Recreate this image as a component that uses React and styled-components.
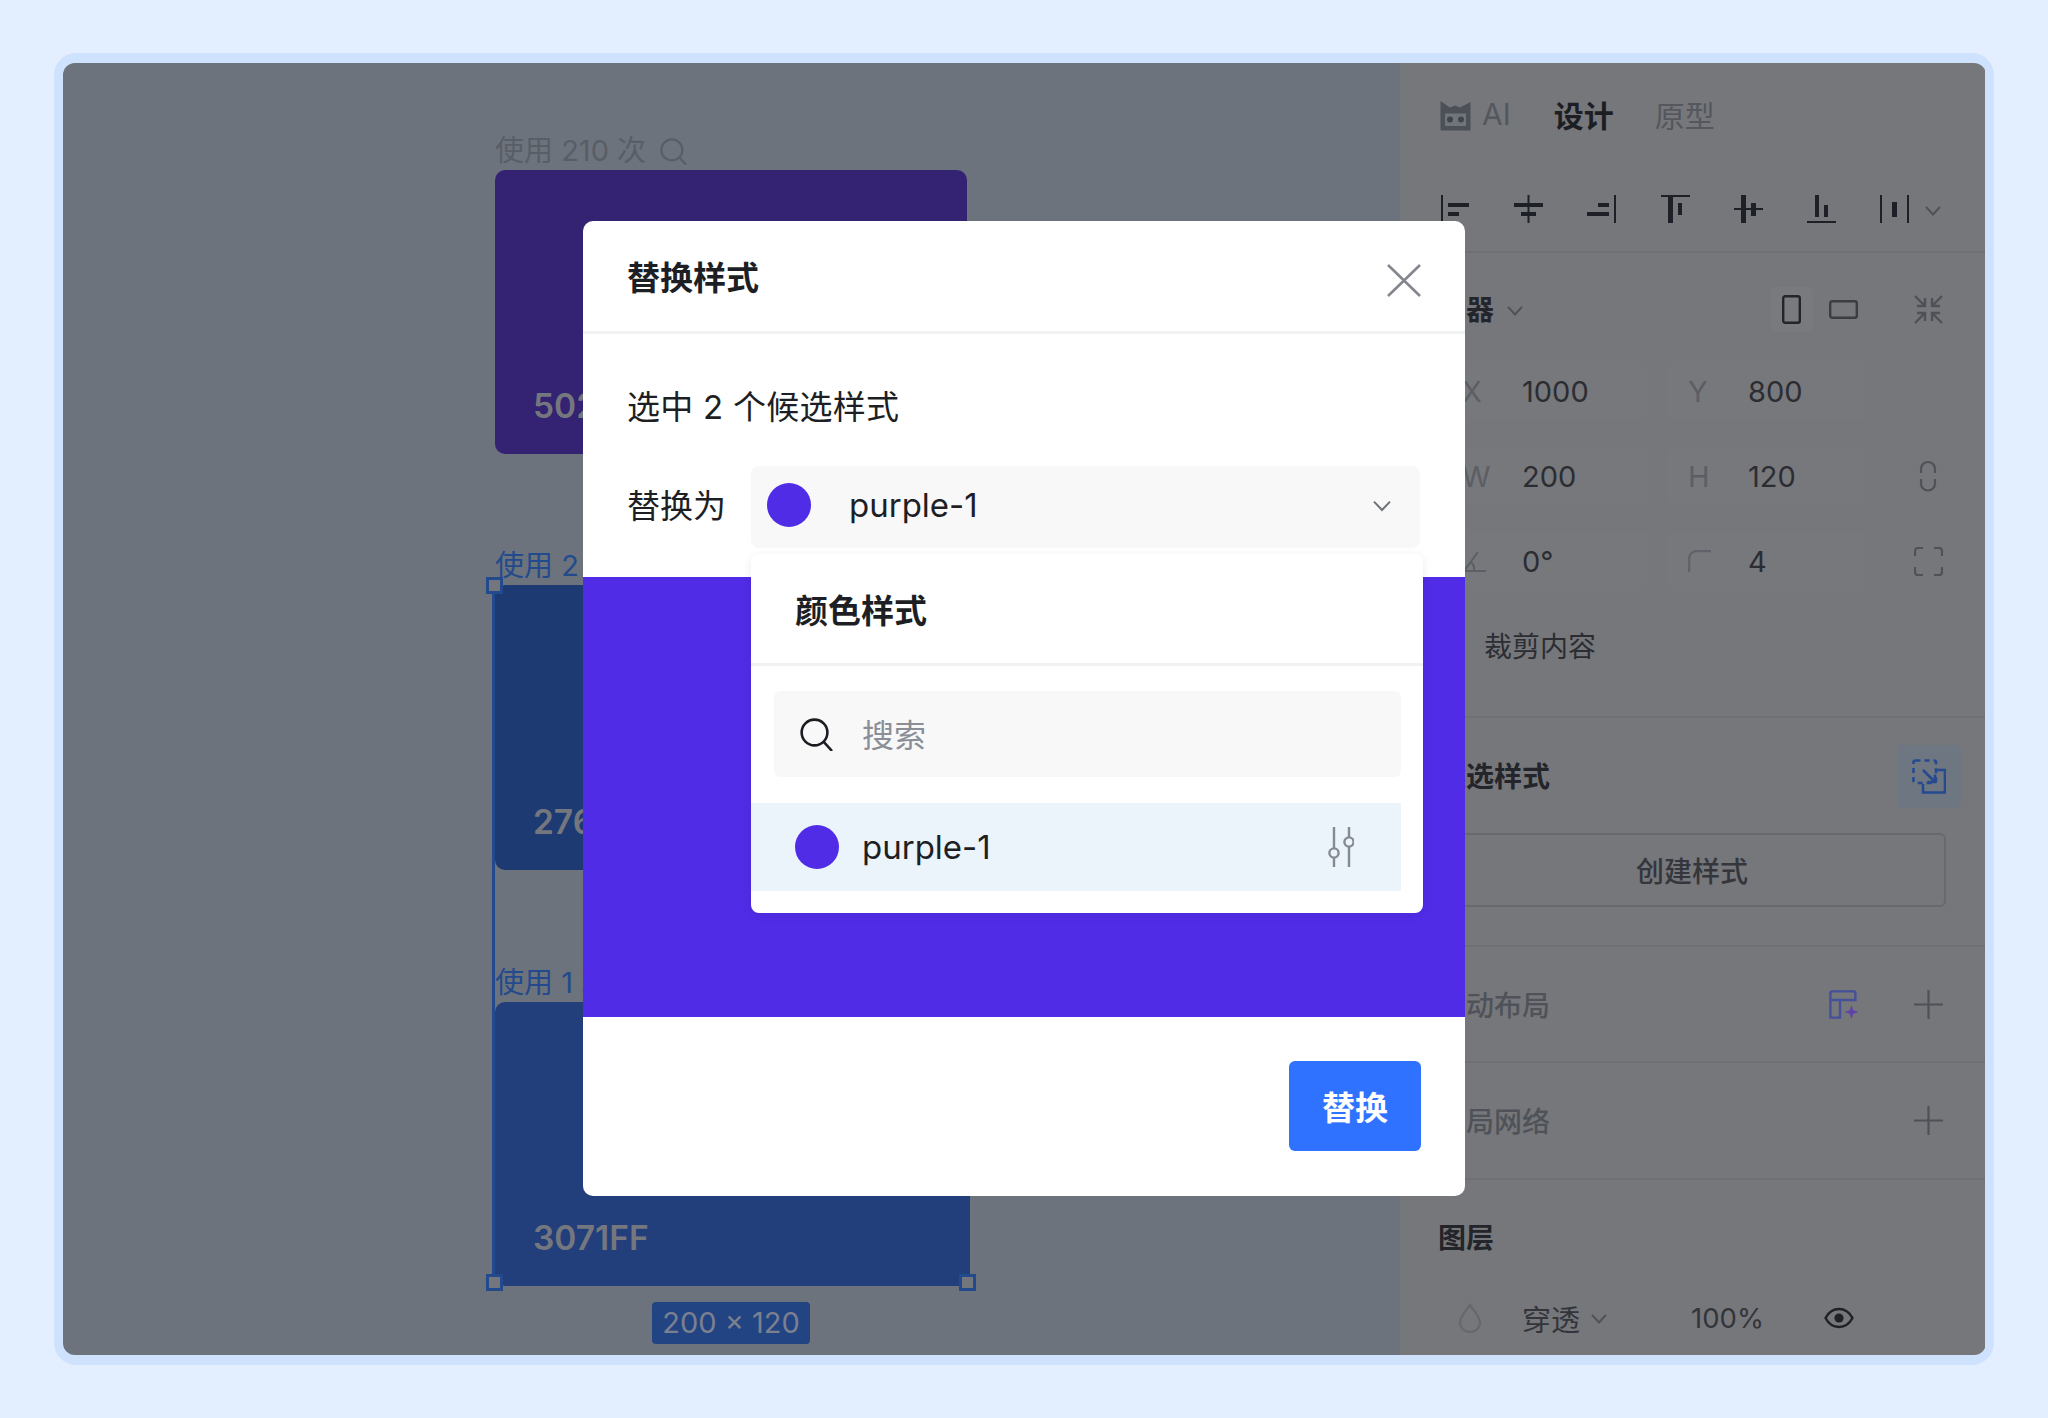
import React from "react";
import styled, { createGlobalStyle } from "styled-components";

const Global = createGlobalStyle`
  html, body { margin: 0; padding: 0; background: #e3effe; }
  body { font-family: Inter, "Noto Sans CJK SC", sans-serif; -webkit-font-smoothing: antialiased; }
  * { box-sizing: border-box; }
`;

const Page = styled.div`
  width: 2048px;
  height: 1418px;
  padding: 53px 54px;
  overflow: hidden;
`;
const Frame = styled.div`
  position: relative;
  width: 1940px;
  height: 1312px;
  border: 10px solid #cfe2fd;
  border-left-width: 9px;
  border-right-width: 8px;
  border-radius: 22px;
  display: flex;
  background: #cfe2fd;
`;
const Window = styled.div`
  flex: 1;
  display: flex;
  border-radius: 12px;
  overflow: hidden;
`;

/* ---- canvas ---- */
const Canvas = styled.div`
  position: relative;
  width: 1337px;
  height: 1292px;
  background: #6c737c;
  padding: 69px 0 0 432px;
`;
const Usage = styled.div`
  display: flex;
  align-items: center;
  gap: 14px;
  height: 38px;
  margin-top: ${p => p.$gap || 0}px;
  font-size: 29px;
  line-height: 38px;
  white-space: nowrap;
  color: ${p => (p.$selected ? "#234a8c" : "#595e66")};
`;
const Swatch = styled.div`
  position: relative;
  width: ${p => (p.$selected ? 475 : 472)}px;
  height: ${p => p.$h}px;
  border-radius: 10px;
  background: ${p => p.$color};
`;
const SwatchName = styled.div`
  position: absolute;
  left: 38px;
  bottom: 28px;
  font-size: 33.5px;
  line-height: 40px;
  font-weight: 600;
  color: #75777e;
`;
const Selection = styled.div`
  position: absolute;
  left: 429px;
  top: 522px;
  width: 478px;
  height: 701px;
  border-left: 3px solid #234a8c;
`;
const Handle = styled.div`
  position: absolute;
  left: ${p => p.$x}px;
  top: ${p => p.$y}px;
  width: 17px;
  height: 17px;
  background: #73767c;
  border: 3px solid #234a8c;
`;
const SizeTag = styled.div`
  position: absolute;
  left: 589px;
  top: 1239px;
  width: 158px;
  height: 42px;
  border-radius: 4px;
  background: #234482;
  color: #7b8090;
  font-size: 29px;
  line-height: 41px;
  text-align: center;
  white-space: nowrap;
`;

/* ---- side panel ---- */
const Side = styled.aside`
  width: 585px;
  height: 1292px;
  background: #76777b;
  display: flex;
  flex-direction: column;
  color: #24262b;
  font-size: 28px;
`;
const Tabs = styled.div`
  height: 106px;
  padding: 0 38px 0 40px;
  display: flex;
  align-items: center;
  flex-shrink: 0;
`;
const Tab = styled.div`
  margin-left: ${p => p.$ml || 0}px;
  padding-bottom: 4px;
  font-size: 30px;
  font-weight: ${p => (p.$active ? 600 : 400)};
  color: ${p => (p.$active ? "#1c1e23" : "#54575d")};
`;
const AlignBar = styled.div`
  height: 84px;
  padding: 26px 0 0 41px;
  display: flex;
  align-items: flex-start;
  gap: 44.2px;
  flex-shrink: 0;
  border-bottom: 2px solid #6f7074;
`;
const AlignLast = styled.div`
  display: flex;
  align-items: center;
  gap: 15px;
  height: 29px;
`;
const Section = styled.section`
  height: ${p => p.$h}px;
  flex-shrink: 0;
  padding: ${p => p.$pt || 0}px 39px 0 38px;
  border-bottom: ${p => (p.$last ? "none" : "2px solid #6f7074")};
`;
const SectionRow = styled.div`
  height: 100%;
  display: flex;
  align-items: center;
  justify-content: space-between;
  padding-right: 3px;
`;
const Head = styled.div`
  display: flex;
  align-items: center;
  justify-content: space-between;
  height: ${p => p.$h || 45}px;
`;
const Title = styled.div`
  display: flex;
  align-items: center;
  gap: 12px;
  font-size: 28px;
  line-height: 40px;
  font-weight: ${p => (p.$muted ? 500 : 600)};
  color: ${p => (p.$muted ? "#4f5258" : "#23252a")};
  padding-top: ${p => (p.$muted ? 3 : 0)}px;
`;
const RightIcons = styled.div`
  display: flex;
  align-items: center;
  gap: ${p => p.$gap || 55}px;
  margin-right: ${p => p.$mr || 0}px;
`;
const Toggle = styled.div`
  display: flex;
  align-items: center;
  gap: 9px;
`;
const ToggleCell = styled.div`
  width: 43px;
  height: 45px;
  display: flex;
  align-items: center;
  justify-content: center;
  border-radius: 6px;
  background: ${p => (p.$on ? "#797a7e" : "transparent")};
`;
const FieldGrid = styled.div`
  margin-top: 29px;
  display: grid;
  grid-template-columns: 208px 199px 1fr;
  column-gap: 18px;
  row-gap: 25px;
  padding-left: 2px;
`;
const Field = styled.div`
  height: 60px;
  padding-left: 22px;
  display: flex;
  align-items: center;
  border-radius: 6px;
  background: #77787b;
  font-size: 29px;
  color: #2b2d33;
`;
const FieldLabel = styled.span`
  width: 60px;
  flex-shrink: 0;
  display: flex;
  align-items: center;
  color: #5b5e65;
`;
const FieldAction = styled.div`
  display: flex;
  align-items: center;
  justify-content: flex-end;
  padding-right: ${p => p.$pr || 0}px;
`;
const ClipRow = styled.label`
  margin-top: 34px;
  display: flex;
  align-items: center;
  gap: 22px;
  height: 40px;
  font-size: 28px;
  color: #2b2d33;
`;
const Check = styled.span`
  width: 24px;
  height: 24px;
  border: 2px solid #55585e;
  border-radius: 4px;
`;
const SwapBtn = styled.div`
  width: 64px;
  height: 63px;
  margin-right: -15px;
  border-radius: 4px;
  background: #6e7681;
  display: flex;
  align-items: center;
  justify-content: center;
`;
const CreateBtn = styled.div`
  margin-top: 25px;
  height: 74px;
  border: 2px solid #68696d;
  border-radius: 6px;
  display: flex;
  align-items: center;
  justify-content: center;
  font-size: 28px;
  font-weight: 500;
  color: #34363c;
`;
const LayerRow = styled.div`
  margin-top: 40px;
  height: 40px;
  padding-left: 20px;
  display: flex;
  align-items: center;
  color: #33353b;
`;
const LayerText = styled.span`
  margin-left: ${p => p.$ml}px;
  font-size: ${p => p.$size || 29}px;
`;

/* ---- dialog ---- */
const Dialog = styled.div`
  position: absolute;
  left: 520px;
  top: 158px;
  width: 882px;
  height: 975px;
  border-radius: 10px;
  background: #fff;
  display: flex;
  flex-direction: column;
`;
const DialogHead = styled.div`
  height: 113px;
  flex-shrink: 0;
  padding: 9px 44px 0 44px;
  display: flex;
  align-items: center;
  justify-content: space-between;
  border-bottom: 3px solid #f1f2f3;
`;
const DialogTitle = styled.div`
  margin-top: -10px;
  font-size: 33px;
  font-weight: 600;
  color: #1d1f24;
`;
const DialogBody = styled.div`
  height: 243px;
  flex-shrink: 0;
  padding: 51px 45px 0 44px;
`;
const Hint = styled.div`
  font-size: 33px;
  line-height: 44px;
  letter-spacing: 0.25px;
  color: #1d1f24;
`;
const ReplaceRow = styled.div`
  margin-top: 37px;
  display: flex;
  align-items: center;
  gap: 25px;
`;
const ReplaceLabel = styled.div`
  padding-bottom: 6px;
  font-size: 33px;
  color: #1d1f24;
  white-space: nowrap;
`;
const Select = styled.div`
  width: 669px;
  height: 82px;
  padding: 0 28px 5px 16px;
  display: flex;
  align-items: center;
  gap: 38px;
  border-radius: 8px;
  background: #f8f8f9;
  font-size: 33px;
  color: #1d1f24;
`;
const Dot = styled.span`
  width: 44px;
  height: 44px;
  border-radius: 50%;
  background: #502ce6;
  flex-shrink: 0;
`;
const Grow = styled.span`
  flex: 1;
`;
const Band = styled.div`
  height: 440px;
  flex-shrink: 0;
  background: #502ce6;
`;
const DialogFoot = styled.div`
  flex: 1;
  padding: 44px 44px 0 0;
  display: flex;
  justify-content: flex-end;
  align-items: flex-start;
`;
const Primary = styled.div`
  width: 132px;
  height: 90px;
  border-radius: 6px;
  background: #2e72ff;
  color: #fff;
  font-size: 33px;
  font-weight: 600;
  display: flex;
  align-items: center;
  justify-content: center;
`;
const Menu = styled.div`
  position: absolute;
  left: 168px;
  top: 333px;
  width: 672px;
  height: 359px;
  border-radius: 8px;
  background: #fff;
  box-shadow: 0 2px 10px rgba(20, 20, 60, 0.08);
`;
const MenuHead = styled.div`
  height: 112px;
  padding: 0 0 0 44px;
  display: flex;
  align-items: center;
  border-bottom: 3px solid #f1f2f3;
  font-size: 33px;
  font-weight: 600;
  color: #1d1f24;
`;
const Search = styled.div`
  margin: 25px 22px 0 23px;
  height: 86px;
  padding: 0 0 0 26px;
  display: flex;
  align-items: center;
  gap: 29px;
  border-radius: 6px;
  background: #f8f8f9;
  font-size: 32px;
  color: #8b8e96;
`;
const SearchText = styled.span`
  padding-bottom: 3px;
`;
const MenuItem = styled.div`
  margin: 26px 22px 0 0;
  height: 88px;
  padding: 0 47px 0 44px;
  display: flex;
  align-items: center;
  gap: 23px;
  background: #ebf3fb;
  font-size: 33px;
  color: #1d1f24;
`;

/* ---- icons ---- */
const Svg = ({ w, h, children, ...rest }) => (
  <svg width={w} height={h} viewBox={`0 0 ${w} ${h}`} fill="none" style={{ display: "block", flexShrink: 0 }} {...rest}>
    {children}
  </svg>
);

const ALIGN = [
  [[0, 0, 2, 28], [7, 8, 21, 4], [7, 17, 11, 4]],
  [[13.5, 0, 2, 28], [0, 8, 29, 4], [7, 17, 15, 4]],
  [[27, 0, 2, 28], [11, 8, 11, 4], [0, 17, 22, 4]],
  [[0, 0, 29, 2], [7, 2, 5, 26], [17, 8, 4, 12]],
  [[0, 13, 29, 2], [7, 0, 5, 28], [17, 8, 5, 13]],
  [[0, 26, 29, 2], [8, 0, 4, 22], [17, 10, 4, 12]],
  [[0, 0, 2, 28], [27, 0, 2, 28], [12, 7, 5, 15]],
];
const AlignIcon = ({ rects }) => (
  <Svg w={29} h={29}>
    {rects.map((r, i) => (
      <rect key={i} x={r[0]} y={r[1]} width={r[2]} height={r[3]} fill="#1d2026" />
    ))}
  </Svg>
);
const Chevron = ({ color = "#4e5157", size = 18 }) => (
  <Svg w={size} h={size}>
    <path d={`M2 ${size * 0.33}L${size / 2} ${size * 0.75}L${size - 2} ${size * 0.33}`} stroke={color} strokeWidth="2" />
  </Svg>
);
const Cat = () => (
  <Svg w={31} h={30}>
    <path d="M0.5 0L10 6.5L15 4.5L20 6.5L30.5 1V29.5H0.5Z" fill="#4c5158" />
    <rect x="5" y="12.5" width="21" height="12.5" fill="#70757b" />
    <circle cx="10" cy="18.5" r="3" fill="#40454c" />
    <circle cx="21" cy="18.5" r="3" fill="#40454c" />
  </Svg>
);
const SearchIcon = ({ size = 33, color = "#1b1d22", sw = 2.6 }) => (
  <Svg w={size} h={size}>
    <circle cx={size * 0.44} cy={size * 0.44} r={size * 0.39} stroke={color} strokeWidth={sw} />
    <path d={`M${size * 0.72} ${size * 0.72}L${size * 0.97} ${size}`} stroke={color} strokeWidth={sw} />
  </Svg>
);
const Close = () => (
  <Svg w={34} h={33}>
    <path d="M1 1L33 32M33 1L1 32" stroke="#83868d" strokeWidth="2.6" />
  </Svg>
);
const Sliders = () => (
  <Svg w={26} h={40}>
    <path d="M6 0V21M6 31V40M21 0V10M21 19V40" stroke="#868a92" strokeWidth="2.4" />
    <circle cx="6" cy="26" r="4.6" stroke="#868a92" strokeWidth="2.4" />
    <circle cx="21" cy="15" r="4.6" stroke="#868a92" strokeWidth="2.4" />
  </Svg>
);
const Collapse = () => (
  <Svg w={29} h={29}>
    <path
      d="M1 1L11 11M3 11H11V3M28 1L18 11M26 11H18V3M1 28L11 18M3 18H11V26M28 28L18 18M26 18H18V26"
      stroke="#4e5157"
      strokeWidth="2.4"
    />
  </Svg>
);
const Portrait = () => (
  <Svg w={19} h={29}>
    <rect x="1.2" y="1.2" width="16.6" height="26.6" rx="2" stroke="#22252a" strokeWidth="2.4" />
  </Svg>
);
const Landscape = () => (
  <Svg w={29} h={19}>
    <rect x="1.2" y="1.2" width="26.6" height="16.6" rx="2" stroke="#3a3d42" strokeWidth="2.4" />
  </Svg>
);
const Link = () => (
  <Svg w={18} h={32}>
    <path d="M2 13V9A7 7 0 0 1 16 9V13M2 19V23.5A7 7 0 0 0 16 23.5V19" stroke="#4e5157" strokeWidth="2.2" />
  </Svg>
);
const Corners = () => (
  <Svg w={29} h={29}>
    <path
      d="M1 9V4A3 3 0 0 1 4 1H9M20 1H25A3 3 0 0 1 28 4V9M28 20V25A3 3 0 0 1 25 28H20M9 28H4A3 3 0 0 1 1 25V20"
      stroke="#4e5157"
      strokeWidth="2.2"
    />
  </Svg>
);
const RadiusIcon = () => (
  <Svg w={23} h={22}>
    <path d="M1.2 22V8A7 7 0 0 1 8 1.2H23" stroke="#5f6268" strokeWidth="2.2" />
  </Svg>
);
const RotateIcon = () => (
  <Svg w={24} h={22}>
    <path d="M2 21H24M2 21L16 2M12 21A10 10 0 0 0 9 12" stroke="#5b5e65" strokeWidth="2" />
  </Svg>
);
const SwapIcon = () => (
  <Svg w={34} h={35}>
    <rect x="1.5" y="1.5" width="22.5" height="22.5" rx="2" stroke="#264a90" strokeWidth="2.6" strokeDasharray="5 4" />
    <path d="M25 11H33V33.5H11V25" stroke="#264a90" strokeWidth="2.6" />
    <path d="M11 11L23 23M23 15.5V23H15.5" stroke="#264a90" strokeWidth="2.6" />
  </Svg>
);
const LayoutSpark = () => (
  <Svg w={30} h={29}>
    <path d="M2.6 1.4H25A1.4 1.4 0 0 1 26.4 2.8V10H1.4V2.6A1.2 1.2 0 0 1 2.6 1.4ZM1.4 10V27.6H11V10" stroke="#44509a" strokeWidth="2.4" />
    <path d="M22.5 15L24.2 20.3L29.5 22L24.2 23.7L22.5 29L20.8 23.7L15.5 22L20.8 20.3Z" fill="#5d43a8" />
  </Svg>
);
const Plus = () => (
  <Svg w={29} h={29}>
    <path d="M14.5 0V29M0 14.5H29" stroke="#4e5157" strokeWidth="2.2" />
  </Svg>
);
const Drop = () => (
  <Svg w={24} h={30}>
    <path d="M12 2C7 9 2 14 2 19.5A10 9.5 0 0 0 22 19.5C22 14 17 9 12 2Z" stroke="#666870" strokeWidth="2.2" />
  </Svg>
);
const Eye = () => (
  <Svg w={30} h={22}>
    <path d="M1.5 11C5 4.5 10 2 15 2S25 4.5 28.5 11C25 17.5 20 20 15 20S5 17.5 1.5 11Z" stroke="#1f2126" strokeWidth="2.4" />
    <circle cx="15" cy="11" r="4.6" fill="#1f2126" />
  </Svg>
);

const Swatches = () => (
  <>
    <Usage>
      使用 210 次
      <SearchIcon size={27} color="#595e66" sw={2.2} />
    </Usage>
    <Swatch $color="#332372" $h={284}>
      <SwatchName>502CE8</SwatchName>
    </Swatch>
    <Usage $gap={93} $selected>使用 2 次</Usage>
    <Swatch $color="#1e3a72" $h={285} $selected>
      <SwatchName>2761D8</SwatchName>
    </Swatch>
    <Usage $gap={94} $selected>使用 1 次</Usage>
    <Swatch $color="#233f7b" $h={284} $selected>
      <SwatchName>3071FF</SwatchName>
    </Swatch>
  </>
);

const SidePanel = () => (
  <Side>
    <Tabs>
      <Cat />
      <Tab $ml={11}>AI</Tab>
      <Tab $ml={43} $active>设计</Tab>
      <Tab $ml={41}>原型</Tab>
    </Tabs>
    <AlignBar>
      {ALIGN.slice(0, 6).map((r, i) => (
        <AlignIcon key={i} rects={r} />
      ))}
      <AlignLast>
        <AlignIcon rects={ALIGN[6]} />
        <Chevron />
      </AlignLast>
    </AlignBar>
    <Section $h={465} $pt={34}>
      <Head>
        <Title>
          容器
          <Chevron />
        </Title>
        <RightIcons $gap={49} $mr={3}>
          <Toggle>
            <ToggleCell $on><Portrait /></ToggleCell>
            <ToggleCell><Landscape /></ToggleCell>
          </Toggle>
          <Collapse />
        </RightIcons>
      </Head>
      <FieldGrid>
        <Field><FieldLabel>X</FieldLabel>1000</Field>
        <Field><FieldLabel>Y</FieldLabel>800</Field>
        <FieldAction />
        <Field><FieldLabel>W</FieldLabel>200</Field>
        <Field><FieldLabel>H</FieldLabel>120</Field>
        <FieldAction $pr={9}><Link /></FieldAction>
        <Field><FieldLabel><RotateIcon /></FieldLabel>0°</Field>
        <Field><FieldLabel><RadiusIcon /></FieldLabel>4</Field>
        <FieldAction $pr={3.5}><Corners /></FieldAction>
      </FieldGrid>
      <ClipRow>
        <Check />
        裁剪内容
      </ClipRow>
    </Section>
    <Section $h={229} $pt={27}>
      <Head $h={63}>
        <Title>候选样式</Title>
        <SwapBtn><SwapIcon /></SwapBtn>
      </Head>
      <CreateBtn>创建样式</CreateBtn>
    </Section>
    <Section $h={116}>
      <SectionRow>
        <Title $muted>自动布局</Title>
        <RightIcons>
          <LayoutSpark />
          <Plus />
        </RightIcons>
      </SectionRow>
    </Section>
    <Section $h={117}>
      <SectionRow>
        <Title $muted>布局网络</Title>
        <Plus />
      </SectionRow>
    </Section>
    <Section $pt={38} $h={175} $last>
      <Title>图层</Title>
      <LayerRow>
        <Drop />
        <LayerText $ml={40}>穿透</LayerText>
        <LayerText $ml={10}><Chevron /></LayerText>
        <LayerText $ml={83} $size={27.5}>100%</LayerText>
        <LayerText $ml={60}><Eye /></LayerText>
      </LayerRow>
    </Section>
  </Side>
);

const ReplaceDialog = () => (
  <Dialog>
    <DialogHead>
      <DialogTitle>替换样式</DialogTitle>
      <Close />
    </DialogHead>
    <DialogBody>
      <Hint>选中 2 个候选样式</Hint>
      <ReplaceRow>
        <ReplaceLabel>替换为</ReplaceLabel>
        <Select>
          <Dot />
          <Grow>purple-1</Grow>
          <Chevron color="#6f727a" size={20} />
        </Select>
      </ReplaceRow>
    </DialogBody>
    <Band />
    <DialogFoot>
      <Primary>替换</Primary>
    </DialogFoot>
    <Menu>
      <MenuHead>颜色样式</MenuHead>
      <Search>
        <SearchIcon />
        <SearchText>搜索</SearchText>
      </Search>
      <MenuItem>
        <Dot />
        <Grow>purple-1</Grow>
        <Sliders />
      </MenuItem>
    </Menu>
  </Dialog>
);

export default function App() {
  return (
    <Page>
      <Global />
      <Frame>
        <Window>
          <Canvas>
            <Swatches />
            <Selection />
            <Handle $x={423} $y={514} />
            <Handle $x={423} $y={1211} />
            <Handle $x={896} $y={1211} />
            <SizeTag>200 × 120</SizeTag>
          </Canvas>
          <SidePanel />
        </Window>
        <ReplaceDialog />
      </Frame>
    </Page>
  );
}
